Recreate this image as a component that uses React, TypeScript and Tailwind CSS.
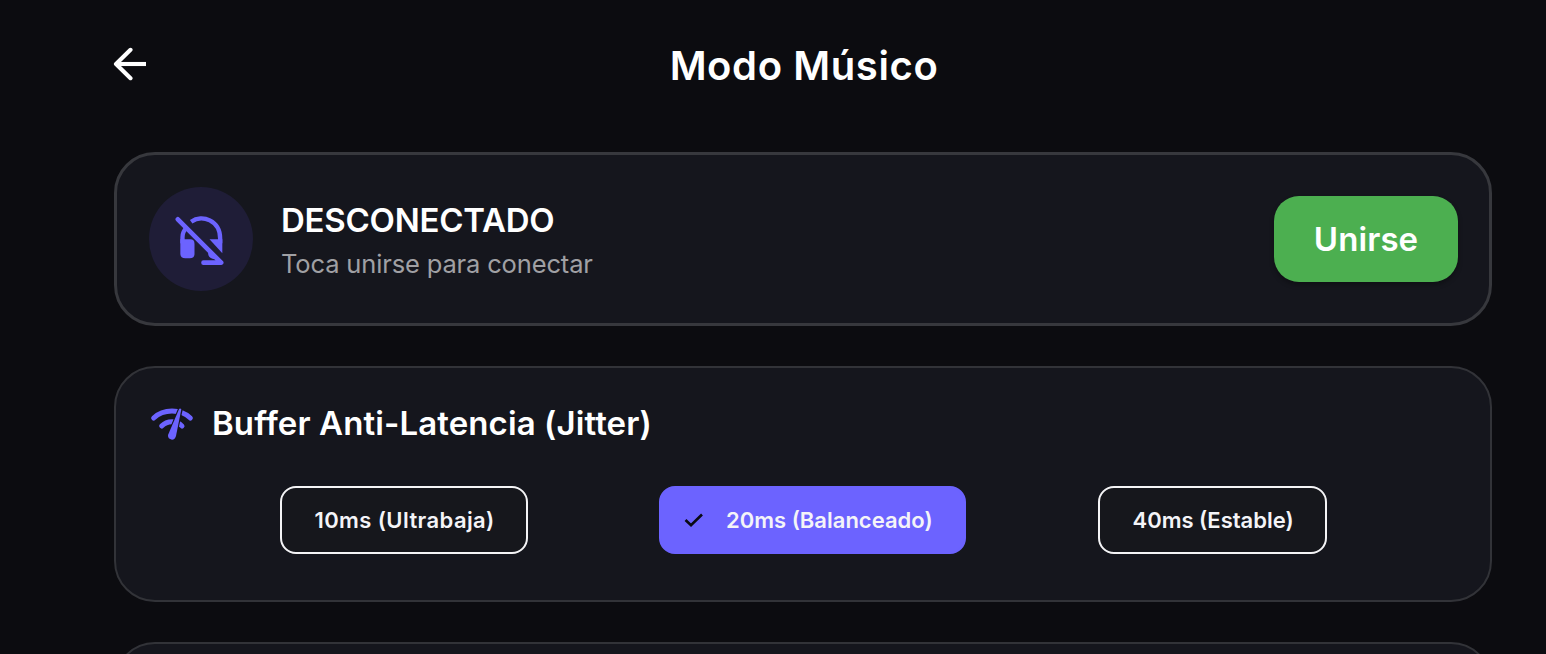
import type { ReactNode } from "react";

function BackIcon() {
  return (
    <svg width="34" height="34" viewBox="0 0 34 34" fill="none" stroke="#fff" strokeWidth="4.1">
      <path d="M3 17H33" />
      <path d="M17.500 2.800L3 17L17.500 31.200" strokeLinecap="round" strokeLinejoin="round" />
    </svg>
  );
}

function HeadsetOffIcon() {
  return (
    <svg width="104" height="104" viewBox="10.5 21 312 312" fill="none" stroke="#6c63ff">
      <path d="M137 125C170 102 224 121 224 176V190" strokeWidth="13" />
      <path d="M192 178H230.500V220Z" fill="#6c63ff" stroke="none" />
      <path d="M111 190V172C111 160 116 150 124 142" strokeWidth="13" />
      <path
        d="M104.500 178H134Q147 178 147 191V221Q147 235 133 235H119Q104.500 235 104.500 220Z"
        fill="#6c63ff"
        stroke="none"
      />
      <path d="M188 212V221Q189 233 201 236L216 240Z" fill="#6c63ff" stroke="none" />
      <path d="M97 118L227 248H174" strokeWidth="14" strokeLinecap="round" strokeLinejoin="round" />
    </svg>
  );
}

function NetworkCheckIcon() {
  return (
    <svg width="44" height="34" viewBox="29 37 132 102" fill="none" stroke="#6c63ff">
      <path d="M40 73Q62 52 95 52Q128 52 150 73" strokeWidth="15" strokeLinecap="round" />
      <path d="M64 97Q76 84 95 84Q114 84 125 97" strokeWidth="15" strokeLinecap="round" />
      <path
        d="M117 44L84 123Q84 136 95 136Q104 136 106 127L124 46Z"
        fill="#15161d"
        stroke="#15161d"
        strokeWidth="7"
      />
      <path d="M116 47Q119 42 123 47L107 127Q104 138 95 138Q82 136 83 124Z" fill="#6c63ff" stroke="none" />
    </svg>
  );
}

function Chip({ children, selected = false }: { children: ReactNode; selected?: boolean }) {
  const look = selected ? "border-[#6c63ff] bg-[#6c63ff] pl-[22px]" : "border-[#f4f4f6] bg-[#16171c] pl-[33px]";
  return (
    <button
      className={`flex h-[68px] items-center rounded-[16px] border-2 text-[22px] leading-none font-semibold whitespace-nowrap text-[#f4f4f8] ${look}`}
    >
      {selected && (
        <svg className="mr-[21px]" width="22" height="16" viewBox="0 0 22 16" fill="none">
          <path d="M2.500 8L8 13.300L19 2.500" stroke="#0a0a14" strokeWidth="2.600" />
        </svg>
      )}
      {children}
    </button>
  );
}

export default function App() {
  return (
    <div className="flex h-[654px] w-full flex-col overflow-hidden bg-[#0c0c10] pr-[54px] pl-[114px] font-['Inter','Noto_Sans',sans-serif] text-white">
      <header className="grid h-[152px] shrink-0 grid-cols-[34px_1fr_34px] items-start">
        <button aria-label="Volver" className="mt-[47px] -ml-px">
          <BackIcon />
        </button>
        <h1 className="mt-[41px] pl-[2px] text-center text-[40px] leading-[50px] font-semibold tracking-[0.6px]">
          Modo Músico
        </h1>
      </header>

      <main className="flex flex-col">
        <section className="flex h-[174px] shrink-0 items-center rounded-[41px] border-3 border-[#37383d] bg-[#15161d] pr-[31px] pl-[31.5px]">
          <div className="h-[104px] w-[104px] shrink-0 rounded-full bg-[#1f1d37]">
            <HeadsetOffIcon />
          </div>
          <div className="ml-[28.500px] flex flex-1 flex-col pt-[5px]">
            <h2 className="text-[33px] leading-[44px] font-semibold tracking-[-0.25px]">DESCONECTADO</h2>
            <p className="text-[25.5px] leading-[44px] tracking-[-0.15px] text-[#a0a0a4]">
              Toca unirse para conectar
            </p>
          </div>
          <button className="h-[86px] w-[184px] rounded-[25px] bg-[#4caf50] text-[33px] leading-none font-semibold tracking-[0.1px] shadow-[0_3px_5px_rgba(0,0,0,0.3)]">
            Unirse
          </button>
        </section>

        <section className="mt-[40px] flex h-[236px] shrink-0 flex-col rounded-[41px] border-2 border-[#323338] bg-[#15161d] px-[32px]">
          <div className="mt-[33px] flex h-[44px] items-center gap-[18px] pl-[2px]">
            <NetworkCheckIcon />
            <h2 className="text-[33px] leading-[44px] font-semibold tracking-[0.1px] whitespace-nowrap">
              Buffer Anti-Latencia (Jitter)
            </h2>
          </div>
          <div className="mt-[41px] flex justify-evenly">
            <div className="w-[248px] *:w-full *:tracking-[0.4px]">
              <Chip>10ms (Ultrabaja)</Chip>
            </div>
            <div className="w-[307px] *:w-full">
              <Chip selected>20ms (Balanceado)</Chip>
            </div>
            <div className="w-[229px] *:w-full">
              <Chip>40ms (Estable)</Chip>
            </div>
          </div>
        </section>

        <section className="mt-[40px] h-[236px] shrink-0 rounded-[41px] border-2 border-[#323338] bg-[#15161d]" />
      </main>
    </div>
  );
}
